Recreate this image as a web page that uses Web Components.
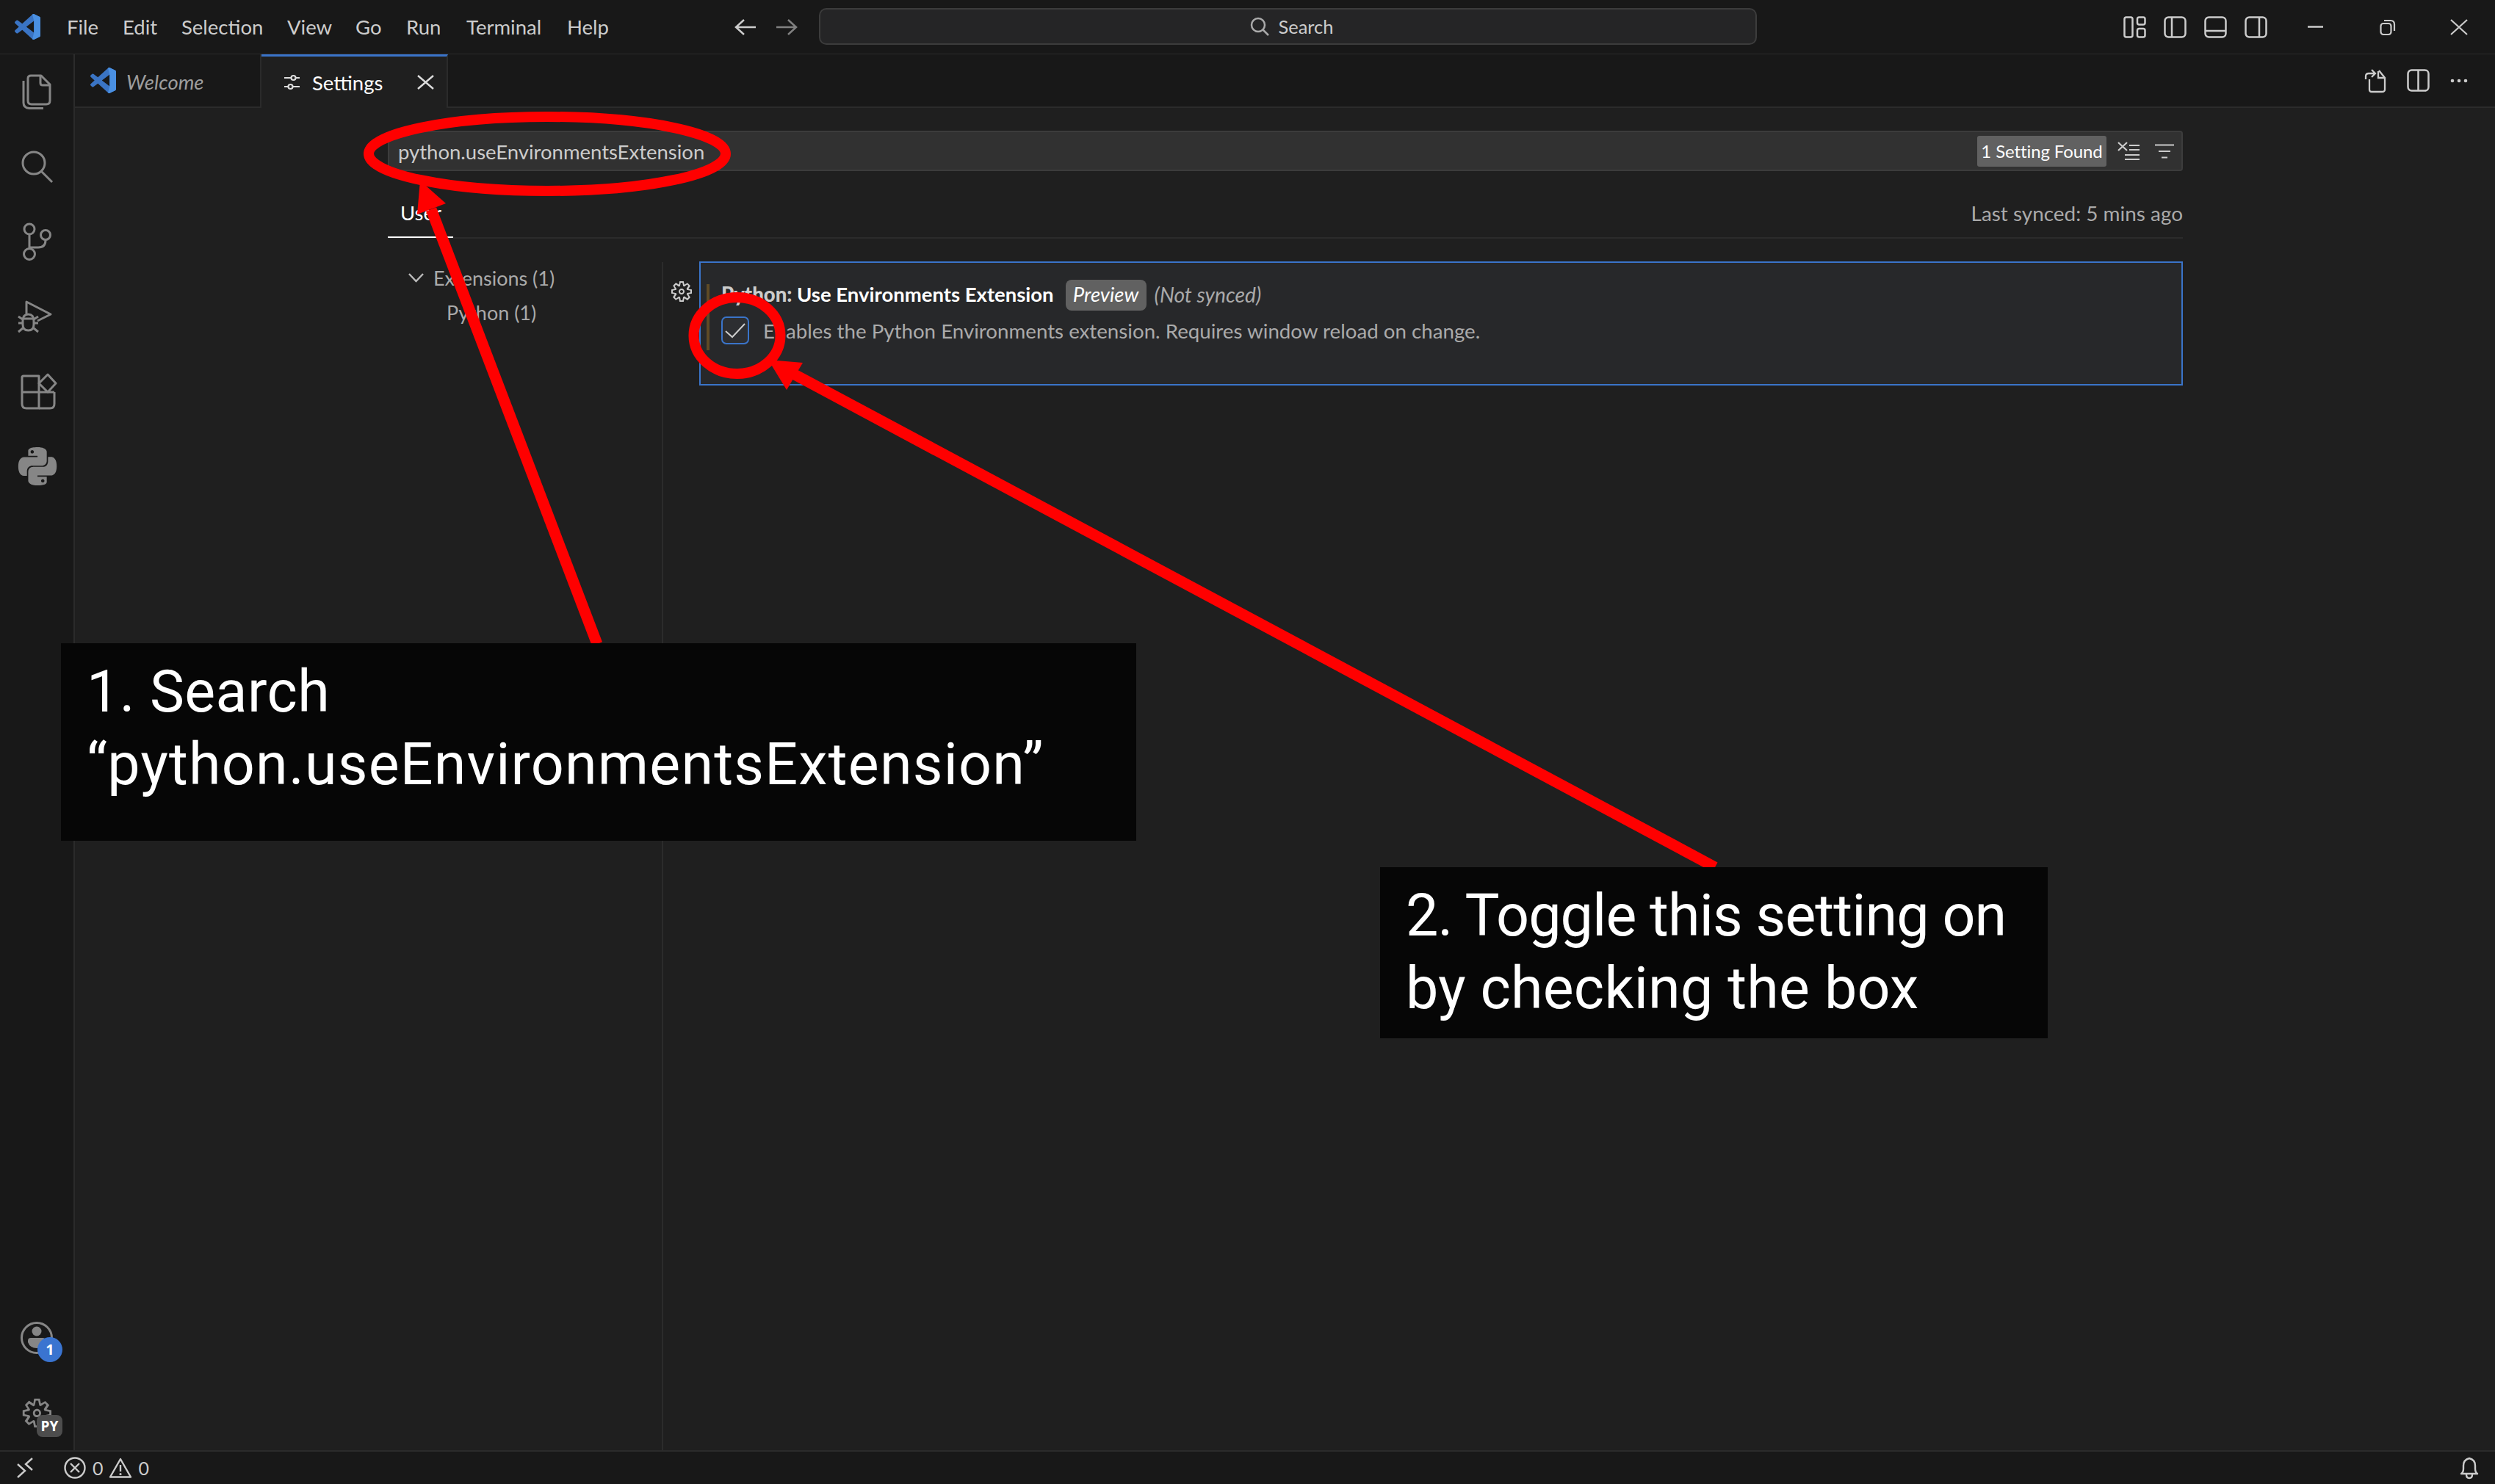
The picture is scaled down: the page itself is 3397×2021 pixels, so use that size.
<!DOCTYPE html>
<html lang="en"><head><meta charset="utf-8"><title>Settings</title>
<style>
html,body{margin:0;height:100%;background:#1f1f1f;overflow:hidden}
body{font-family:Lato,"Open Sans",sans-serif;font-size:27.5px;color:#ccc}
</style></head><body>
<vs-window>
  <vs-titlebar slot="title"></vs-titlebar>
  <vs-activitybar slot="activity"></vs-activitybar>
  <vs-tabs slot="tabs"></vs-tabs>
  <vs-settings slot="editor"></vs-settings>
  <vs-statusbar slot="status"></vs-statusbar>
</vs-window>
<vs-annotations>
  <vs-callout style="left:83px;top:876px;width:1464px;height:269px"><span style="letter-spacing:.4px">1. Search</span><br>“python.useEnvironmentsExtension”</vs-callout>
  <vs-callout style="left:1879px;top:1181px;width:909px;height:233px"><span style="letter-spacing:-.9px">2. Toggle this setting on</span><br><span style="letter-spacing:.2px">by checking the box</span></vs-callout>
</vs-annotations>
<script>
const GEAR = 'M9.100 4.400 8.600 2H7.400l-.5 2.400-.7.3-2-1.300-.9.8 1.300 2-.2.7-2.400.5v1.200l2.400.5.3.8-1.300 2 .8.8 2-1.300.8.3.4 2.300h1.200l.5-2.400.8-.3 2 1.300.8-.8-1.300-2 .3-.8 2.300-.4V7.400l-2.400-.5-.3-.8 1.300-2-.8-.8-2 1.300-.7-.2zM9.400 1l.5 2.400L12 2.100l2 2-1.400 2.100 2.400.4v2.800l-2.400.5L14 12l-2 2-2.100-1.400-.5 2.400H6.600l-.5-2.400L4 13.900l-2-2 1.400-2.100L1 9.400V6.600l2.400-.5L2.100 4l2-2 2.100 1.400.4-2.400h2.800zm.6 7c0 1.100-.9 2-2 2s-2-.9-2-2 .9-2 2-2 2 .9 2 2zM8 9c.6 0 1-.4 1-1s-.4-1-1-1-1 .4-1 1 .4 1 1 1z';
// all icons drawn in real pixels: [width, height, inner svg]
const ICONS = {
  logo: [35,35,'<g transform="scale(.35)"><path fill="#3a74c4" d="M96.500 10.800 75.900.9a6.200 6.200 0 0 0-7.100 1.200L29.400 38 12.200 25a4.200 4.200 0 0 0-5.300.2L1.400 30.200a4.200 4.200 0 0 0 0 6.200L16.300 50 1.400 63.600a4.200 4.200 0 0 0 0 6.200l5.500 5a4.200 4.200 0 0 0 5.300.2L29.400 62l39.400 35.900a6.200 6.200 0 0 0 7.100 1.200l20.600-9.900A6.200 6.200 0 0 0 100 83.600V16.400a6.200 6.200 0 0 0-3.500-5.600zM75 72.700 45.100 50 75 27.300z"/><path fill="#4a90e2" d="M75.900.9 96.500 10.800A6.200 6.200 0 0 1 100 16.400V83.600a6.200 6.200 0 0 1-3.500 5.600L75.900 99.100a6.200 6.200 0 0 1-7.100-1.200L75 72.700V27.300L68.800 2.100A6.200 6.200 0 0 1 75.900.9z"/></g>'],
  back: [30,24,'<path d="M29 12H3M13 2 2 12l11 10" fill="none" stroke="#ccc" stroke-width="2.500"/>'],
  fwd: [30,24,'<path d="M1 12h26M17 2l11 10-11 10" fill="none" stroke="#808080" stroke-width="2.500"/>'],
  search: [26,26,'<circle cx="11" cy="11" r="9" fill="none" stroke="#aaa" stroke-width="2.500"/><path d="m17 17 8 8" stroke="#aaa" stroke-width="2.500"/>'],
  lay1: [31,30,'<g fill="none" stroke="#ccc" stroke-width="2.500"><rect x="1.500" y="1.500" width="11" height="27" rx="2.500"/><rect x="19" y="1.500" width="10.500" height="10" rx="2.500"/><rect x="19" y="17" width="10.500" height="11.500" rx="2.500"/></g>'],
  lay2: [31,30,'<g fill="none" stroke="#ccc" stroke-width="2.500"><rect x="1.500" y="1.500" width="28" height="27" rx="5"/><path d="M11 2v26"/></g>'],
  lay3: [31,30,'<g fill="none" stroke="#ccc" stroke-width="2.500"><rect x="1.500" y="1.500" width="28" height="27" rx="5"/><path d="M2 20h27"/></g>'],
  lay4: [31,30,'<g fill="none" stroke="#ccc" stroke-width="2.500"><rect x="1.500" y="1.500" width="28" height="27" rx="5"/><path d="M20 2v26"/></g>'],
  min: [21,3,'<path d="M0 1.500h21" stroke="#ccc" stroke-width="2.500"/>'],
  restore: [21,22,'<g fill="none" stroke="#ccc" stroke-width="2.200"><rect x="1.500" y="6" width="14" height="15" rx="3.500"/><path d="M6 2h9q5 0 5 5v9"/></g>'],
  close: [24,22,'<path d="M1 1l22 20M23 1 1 21" stroke="#ccc" stroke-width="2.200"/>'],
  tabclose: [23,18,'<path d="M1 0l21 18M22 0 1 18" stroke="#ddd" stroke-width="2.400"/>'],
  sliders: [21,22,'<g fill="none" stroke="#ddd" stroke-width="2.200"><path d="M0 5h9M16 5h5M0 17h5M12 17h9"/><circle cx="12.500" cy="5" r="3"/><circle cx="8.500" cy="17" r="3"/></g>'],
  json: [30,32,'<g fill="none" stroke="#ccc" stroke-width="2.300"><path d="M7 14v14q0 3 3 3h14q4 0 4-3V12L20 2"/><path d="M19 3v9h9"/><path d="M2 14V10q0-4 4-4h8M10 1l5 5-5 5"/></g>'],
  split: [31,31,'<g fill="none" stroke="#ccc" stroke-width="2.500"><rect x="1.500" y="1.500" width="28" height="28" rx="5"/><path d="M15.500 2v27"/></g>'],
  more: [24,6,'<g fill="#ccc"><circle cx="3" cy="3" r="2.300"/><circle cx="12" cy="3" r="2.300"/><circle cx="21" cy="3" r="2.300"/></g>'],
  clear: [30,26,'<path d="M1 1l12 11M13 1 1 12M16 5h14M16 11h14M10 18h20M10 24h20" fill="none" stroke="#ccc" stroke-width="2.200"/>'],
  filter: [26,20,'<path d="M0 1.500h26M5 10h16M9 18.500h8" fill="none" stroke="#ccc" stroke-width="2.200"/>'],
  chevron: [21,13,'<path d="M1 1l9.500 10L20 1" fill="none" stroke="#bbb" stroke-width="2.400"/>'],
  check: [28,20,'<path d="M1 11l9 8L27 1" fill="none" stroke="#ccc" stroke-width="2"/>'],
  cog: [32,32,'<path fill="#ccc" fill-rule="evenodd" transform="scale(2)" d="'+GEAR+'"/>'],
  files: [40,48,'<g fill="none" stroke="#868686" stroke-width="3" stroke-linejoin="round"><path d="M2 9v30q0 7 8 7.500h19"/><path d="M8 6q0-4 4-4h14l12 12v22q0 5-5 5H13q-5 0-5-5z"/><path d="M25 2v10q0 3 3 3h10"/></g>'],
  explore: [44,44,'<g fill="none" stroke="#868686" stroke-width="3"><circle cx="17" cy="17" r="15"/><path d="m27 28 15 15"/></g>'],
  git: [38,52,'<g fill="none" stroke="#868686" stroke-width="3"><circle cx="8" cy="9" r="7"/><circle cx="8" cy="43" r="7.500"/><circle cx="30" cy="17" r="6.500"/><path d="M8 16v20M30 24q0 10-10 10H8"/></g>'],
  debug: [46,46,'<g fill="none" stroke="#868686" stroke-width="3" stroke-linejoin="round"><path d="M11 19V3l33 17-18 9"/><path d="M6 29q0-9 7.500-9T21 29v5q0 8-7.500 8T6 34z"/><path d="M6 26h15M0 23l6 4M27 23l-6 4M0 32h6M21 32h6M0 44l6-5M27 44l-6-5"/></g>'],
  ext: [50,49,'<g fill="none" stroke="#868686" stroke-width="3" stroke-linejoin="round"><path d="M2 5q0-2 2-2h21v44H8q-6 0-6-6z"/><path d="M2 25h44M25 47h15q6 0 6-6V25"/><path d="M37 1l11 12-11 12-12-12z"/></g>'],
  py: [52,52,'<path fill="#868686" transform="scale(2.170)" d="M14.250.18l.9.2.73.26.59.3.45.32.34.34.25.34.16.33.1.3.04.26.02.2-.01.13V8.500l-.05.63-.13.55-.21.46-.26.38-.3.31-.33.25-.35.19-.35.14-.33.1-.3.07-.26.04-.21.02H8.770l-.69.05-.59.14-.5.22-.41.27-.33.32-.27.35-.2.36-.15.37-.1.35-.07.32-.04.27-.02.21v3.060H3.170l-.21-.03-.28-.07-.32-.12-.35-.18-.36-.26-.36-.36-.35-.46-.32-.59-.28-.73-.21-.88-.14-1.050-.05-1.230.06-1.220.16-1.040.24-.87.32-.71.36-.57.4-.44.42-.33.42-.24.4-.16.36-.1.32-.05.24-.01h.16l.06.01h8.160v-.83H6.180l-.01-2.750-.02-.37.05-.34.11-.31.17-.28.25-.26.31-.23.38-.2.44-.18.51-.15.58-.12.64-.1.71-.06.77-.04.84-.02 1.270.05zm-6.300 1.980l-.23.33-.08.41.08.41.23.34.33.22.41.09.41-.09.33-.22.23-.34.08-.41-.08-.41-.23-.33-.33-.22-.41-.09-.41.09zm13.090 3.950l.28.06.32.12.35.18.36.27.36.35.35.47.32.59.28.73.21.88.14 1.040.05 1.230-.06 1.230-.16 1.040-.24.86-.32.71-.36.57-.4.45-.42.33-.42.24-.4.16-.36.09-.32.05-.24.02-.16-.01h-8.220v.82h5.840l.01 2.760.02.36-.05.34-.11.31-.17.29-.25.25-.31.24-.38.2-.44.17-.51.15-.58.13-.64.09-.71.07-.77.04-.84.01-1.270-.04-1.070-.14-.9-.2-.73-.25-.59-.3-.45-.33-.34-.34-.25-.34-.16-.33-.1-.3-.04-.25-.02-.2.01-.13v-5.340l.05-.64.13-.54.21-.46.26-.38.3-.32.33-.24.35-.2.35-.14.33-.1.3-.06.26-.04.21-.02.13-.01h5.840l.69-.05.59-.14.5-.21.41-.28.33-.32.27-.35.2-.36.15-.36.1-.35.07-.32.04-.28.02-.21V6.070h2.090l.14.01zm-6.470 14.250l-.23.33-.08.41.08.41.23.33.33.23.41.08.41-.08.33-.23.23-.33.08-.41-.08-.41-.23-.33-.33-.23-.41-.08-.41.08z"/>'],
  account: [44,44,'<circle cx="22" cy="22" r="20.500" fill="none" stroke="#868686" stroke-width="3"/><circle cx="22" cy="13" r="6.500" fill="#868686"/><path fill="#868686" d="M10 26q0-4 4-4h16q4 0 4 4v2q-3 8-12 8t-12-8z"/>'],
  gear: [45,45,'<path fill="#868686" fill-rule="evenodd" transform="scale(2.800)" d="'+GEAR+'"/>'],
  remote: [22,28,'<path d="M1 9l10 9L1 27M21 1 12 9l9 8" fill="none" stroke="#ccc" stroke-width="2.400"/>'],
  error: [30,30,'<g fill="none" stroke="#ccc" stroke-width="2.400"><circle cx="15" cy="15" r="13.500"/><path d="m9 9 12 12M21 9 9 21"/></g>'],
  warn: [32,28,'<g fill="none" stroke="#ccc" stroke-width="2.400" stroke-linejoin="round"><path d="M16 2 2 26.500h28z"/><path d="M16 10v9"/></g><circle cx="16" cy="22.500" r="1.600" fill="#ccc"/>'],
  bell: [26,30,'<g fill="none" stroke="#ccc" stroke-width="2.400" stroke-linejoin="round"><path d="M2 23q3-2 3-7v-4q0-8 8-10 8 2 8 10v4q0 5 3 7z"/><path d="M9 24q0 5 4 5t4-5"/></g>']
};

class VsIcon extends HTMLElement {
  connectedCallback() {
    const [w, h, body] = ICONS[this.getAttribute('name')];
    this.attachShadow({ mode: 'open' }).innerHTML = `
      <style>:host{display:block;width:${w}px;height:${h}px;flex:none}svg{display:block}</style>
      <svg xmlns="http://www.w3.org/2000/svg" width="${w}" height="${h}" viewBox="0 0 ${w} ${h}" overflow="visible">${body}</svg>`;
  }
}

class VsWindow extends HTMLElement {
  connectedCallback() {
    this.attachShadow({ mode: 'open' }).innerHTML = `
      <style>
        :host{display:grid;width:3397px;height:2021px;grid-template:74px 1fr 46px / 102px 1fr;background:#1f1f1f}
        .title,.status{grid-column:1/3;display:block}
        .main{display:flex;flex-direction:column;min-width:0}
      </style>
      <div class="title"><slot name="title"></slot></div>
      <div><slot name="activity"></slot></div>
      <div class="main"><slot name="tabs"></slot><slot name="editor"></slot></div>
      <div class="status"><slot name="status"></slot></div>`;
  }
}

class VsTitlebar extends HTMLElement {
  connectedCallback() {
    const menu = [['File',76],['Edit',80],['Selection',144],['View',93],['Go',69],['Run',82],['Terminal',137],['Help',60]];
    this.attachShadow({ mode: 'open' }).innerHTML = `
      <style>
        :host{display:grid;grid-template-columns:91px 909px 115px 1277px 499px 165px 1fr;align-items:center;
          background:#181818;border-bottom:1px solid #2b2b2b;box-sizing:border-box;height:74px}
        .logo{padding-left:20px}
        .menu{display:flex;color:#ccc}
        .nav{display:flex;gap:26px}
        .box{display:flex;align-items:center;justify-content:center;gap:12px;height:50px;box-sizing:border-box;margin-top:-2px;
          background:#252526;border:2px solid #3c3c3c;border-radius:10px;color:#ccc;padding-left:11px;font-size:25.500px}
        .lay{display:flex;gap:24px}
        .win{display:grid;grid-template-columns:repeat(3,98px);margin-left:47px;width:294px;justify-items:center;align-items:center}
        .spacer{min-width:0}
      </style>
      <div class="logo"><vs-icon name="logo"></vs-icon></div>
      <div class="menu">${menu.map(([t, w]) => `<span style="width:${w}px">${t}</span>`).join('')}</div>
      <div class="nav"><vs-icon name="back"></vs-icon><vs-icon name="fwd"></vs-icon></div>
      <div class="box"><vs-icon name="search"></vs-icon><span>Search</span></div>
      <div class="spacer"></div>
      <div class="lay"><vs-icon name="lay1"></vs-icon><vs-icon name="lay2"></vs-icon><vs-icon name="lay3"></vs-icon><vs-icon name="lay4"></vs-icon></div>
      <div class="win"><vs-icon name="min"></vs-icon><vs-icon name="restore"></vs-icon><vs-icon name="close"></vs-icon></div>`;
  }
}

class VsActivitybar extends HTMLElement {
  connectedCallback() {
    const shift = { git: 2, debug: -4, ext: 5, py: 2, files: 0, explore: 2 };
    const item = n => `<div class="item"><vs-icon name="${n}" style="margin-left:${shift[n]}px"></vs-icon></div>`;
    this.attachShadow({ mode: 'open' }).innerHTML = `
      <style>
        :host{display:flex;flex-direction:column;justify-content:space-between;height:100%;box-sizing:border-box;
          background:#181818;border-right:2px solid #2b2b2b}
        .item{height:102px;display:flex;align-items:center;justify-content:center;position:relative}
        .badge{position:absolute;left:51px;top:50px;width:34px;height:34px;border-radius:50%;background:#3a74d0;color:#fff;
          font:700 20px/34px "Open Sans",sans-serif;text-align:center}
        .py{position:absolute;left:50px;top:54px;width:35px;height:30px;border-radius:8px;background:#4d4d4d;color:#fff;
          font:700 19px/30px "Open Sans",sans-serif;text-align:center}
      </style>
      <div>${['files','explore','git','debug','ext','py'].map(item).join('')}</div>
      <div>
        <div class="item"><vs-icon name="account"></vs-icon><span class="badge">1</span></div>
        <div class="item"><vs-icon name="gear"></vs-icon><span class="py">PY</span></div>
      </div>`;
  }
}

class VsTabs extends HTMLElement {
  connectedCallback() {
    this.attachShadow({ mode: 'open' }).innerHTML = `
      <style>
        :host{display:flex;height:73px;background:#181818;flex:none}
        .tab{box-sizing:border-box;height:73px;display:flex;align-items:center}
        .welcome{width:254px;padding:0 0 0 21px;gap:14px;color:#9d9d9d;font-style:italic;border-bottom:2px solid #2b2b2b;border-right:2px solid #2b2b2b}
        .welcome span{padding-top:4px}
        .active{width:254px;padding-left:31px;color:#fff;background:#1f1f1f;border-top:3px solid #3a74c9;border-right:2px solid #2b2b2b}
        .active span{margin:0 45px 0 17px;width:98px}
        .rest{flex:1;border-bottom:2px solid #2b2b2b;display:flex;align-items:center;justify-content:flex-end;height:73px;box-sizing:border-box;padding-right:37px}
        .rest vs-icon+vs-icon{margin-left:28px}
      </style>
      <div class="tab welcome"><vs-icon name="logo"></vs-icon><span>Welcome</span></div>
      <div class="tab active"><vs-icon name="sliders"></vs-icon><span>Settings</span><vs-icon name="tabclose"></vs-icon></div>
      <div class="rest"><vs-icon name="json"></vs-icon><vs-icon name="split"></vs-icon><vs-icon name="more"></vs-icon></div>`;
  }
}

class VsSettings extends HTMLElement {
  connectedCallback() {
    this.attachShadow({ mode: 'open' }).innerHTML = `
      <style>
        :host{display:flex;flex-direction:column;flex:1;box-sizing:border-box;padding:31px 425px 0 426px;min-height:0}
        .input{display:flex;align-items:center;height:55px;box-sizing:border-box;background:#313131;border:2px solid #3c3c3c;border-radius:4px;padding:0 10px 0 12px;flex:none}
        .q{flex:1;color:#ccc;padding-top:1px}
        .found{background:#616161;color:#fff;border-radius:3px;height:42px;line-height:42px;width:176px;text-align:center;white-space:nowrap;margin-right:15px;font-size:24px;letter-spacing:-.1px}
        .input vs-icon+vs-icon{margin-left:21px}
        .bar{display:flex;justify-content:space-between;height:92px;box-sizing:border-box;border-bottom:2px solid #2b2b2b;flex:none}
        .user{width:89px;box-sizing:border-box;padding-left:17px;color:#fff;height:91px;border-bottom:2px solid #fff;line-height:114px}
        .sync{color:#aaa;line-height:114px;font-size:27.900px}
        .body{display:grid;grid-template-columns:373px 2px 1fr;margin-top:32px;flex:1;min-height:0}
        .tree{color:#aaa;font-size:27px;margin-top:-2px}
        .row{display:flex;align-items:center;height:47px;padding-left:28px;gap:13px}
        .leaf{padding-left:80px}
        .rule{background:#2b2b2b}
      </style>
      <div class="input">
        <span class="q">python.useEnvironmentsExtension</span>
        <span class="found">1 Setting Found</span>
        <vs-icon name="clear"></vs-icon><vs-icon name="filter"></vs-icon>
      </div>
      <div class="bar"><span class="user">User</span><span class="sync">Last synced: 5 mins ago</span></div>
      <div class="body">
        <div class="tree">
          <div class="row"><vs-icon name="chevron"></vs-icon><span>Extensions (1)</span></div>
          <div class="row leaf"><span>Python (1)</span></div>
        </div>
        <div class="rule"></div>
        <vs-setting-item></vs-setting-item>
      </div>`;
  }
}

class VsSettingItem extends HTMLElement {
  connectedCallback() {
    this.attachShadow({ mode: 'open' }).innerHTML = `
      <style>
        :host{display:flex;align-items:flex-start;margin-top:-1px}
        .cog{width:49px;padding:25px 0 0 9px;box-sizing:border-box;flex:none}
        .card{flex:1;display:flex;height:169px;box-sizing:border-box;background:#27282a;border:2px solid #3a74c9}
        .mod{width:4px;height:90px;margin:29px 0 0 8px;background:#5f4a25;flex:none}
        .content{margin:23px 0 0 16px}
        .head{display:flex;align-items:center;height:42px;font-weight:700;color:#fff}
        .head>span.t{margin-top:-3px}
        .head b{color:#ccc}
        .tag{margin-left:16px;width:110px;height:42px;line-height:40px;text-align:center;background:#616161;border-radius:8px;font-style:italic;font-weight:400;color:#fff}
        .sync{margin:-3px 0 0 11px;font-style:italic;font-weight:400;color:#aaa;font-size:28.200px}
        .desc{display:flex;align-items:center;margin-top:8px;color:#aaa;gap:19px;font-size:27.700px}
        .box{width:38px;height:38px;box-sizing:border-box;border:2px solid #3a74c9;border-radius:7px;background:#2d2e31;display:flex;align-items:center;justify-content:center}
      </style>
      <div class="cog"><vs-icon name="cog"></vs-icon></div>
      <div class="card">
        <div class="mod"></div>
        <div class="content">
          <div class="head"><span class="t"><b>Python:&nbsp;</b>Use Environments Extension</span><span class="tag">Preview</span><span class="sync">(Not synced)</span></div>
          <div class="desc"><span class="box"><vs-icon name="check"></vs-icon></span><span>Enables the Python Environments extension. Requires window reload on change.</span></div>
        </div>
      </div>`;
  }
}

class VsStatusbar extends HTMLElement {
  connectedCallback() {
    this.attachShadow({ mode: 'open' }).innerHTML = `
      <style>
        :host{display:flex;align-items:center;height:46px;box-sizing:border-box;background:#181818;border-top:2px solid #2b2b2b;padding:0 22px 0 23px;color:#ccc;font-size:25px}
        .err{margin-left:42px}
        .n{margin:0 7px 0 9px}
        .bell{margin-left:auto}
      </style>
      <vs-icon name="remote"></vs-icon>
      <vs-icon class="err" name="error"></vs-icon><span class="n">0</span>
      <vs-icon name="warn"></vs-icon><span class="n">0</span>
      <vs-icon class="bell" name="bell"></vs-icon>`;
  }
}

// red marks and black callouts drawn over the finished window
class VsAnnotations extends HTMLElement {
  connectedCallback() {
    this.attachShadow({ mode: 'open' }).innerHTML = `
      <style>:host{position:absolute;left:0;top:0;width:3397px;height:2021px;display:block}
        svg{position:absolute;left:0;top:0}</style>
      <svg width="3397" height="2021" viewBox="0 0 3397 2021" fill="none" stroke="#f00" stroke-width="14">
        <ellipse cx="745" cy="209.500" rx="243" ry="50.500"/>
        <ellipse cx="1003.500" cy="457" rx="59" ry="52"/>
        <path d="M813 877 587 285" stroke-width="15"/>
        <path d="M572 246 568 292 607 277Z" fill="#f00" stroke="none"/>
        <path d="M2335 1181 1078 508" stroke-width="15"/>
        <path d="M1046 490 1093 494 1071 531Z" fill="#f00" stroke="none"/>
      </svg>
      <slot></slot>`;
  }
}

class VsCallout extends HTMLElement {
  connectedCallback() {
    this.attachShadow({ mode: 'open' }).innerHTML = `
      <style>:host{position:absolute;display:block;box-sizing:border-box;background:#060606;color:#fff;white-space:nowrap;
        font:79px/99px Roboto,sans-serif;letter-spacing:1.200px;padding:17px 35px}</style><slot></slot>`;
  }
}

[['vs-icon',VsIcon],['vs-window',VsWindow],['vs-titlebar',VsTitlebar],['vs-activitybar',VsActivitybar],['vs-tabs',VsTabs],
 ['vs-settings',VsSettings],['vs-setting-item',VsSettingItem],['vs-statusbar',VsStatusbar],['vs-annotations',VsAnnotations],['vs-callout',VsCallout]]
  .forEach(([n, c]) => customElements.define(n, c));
</script></body></html>
